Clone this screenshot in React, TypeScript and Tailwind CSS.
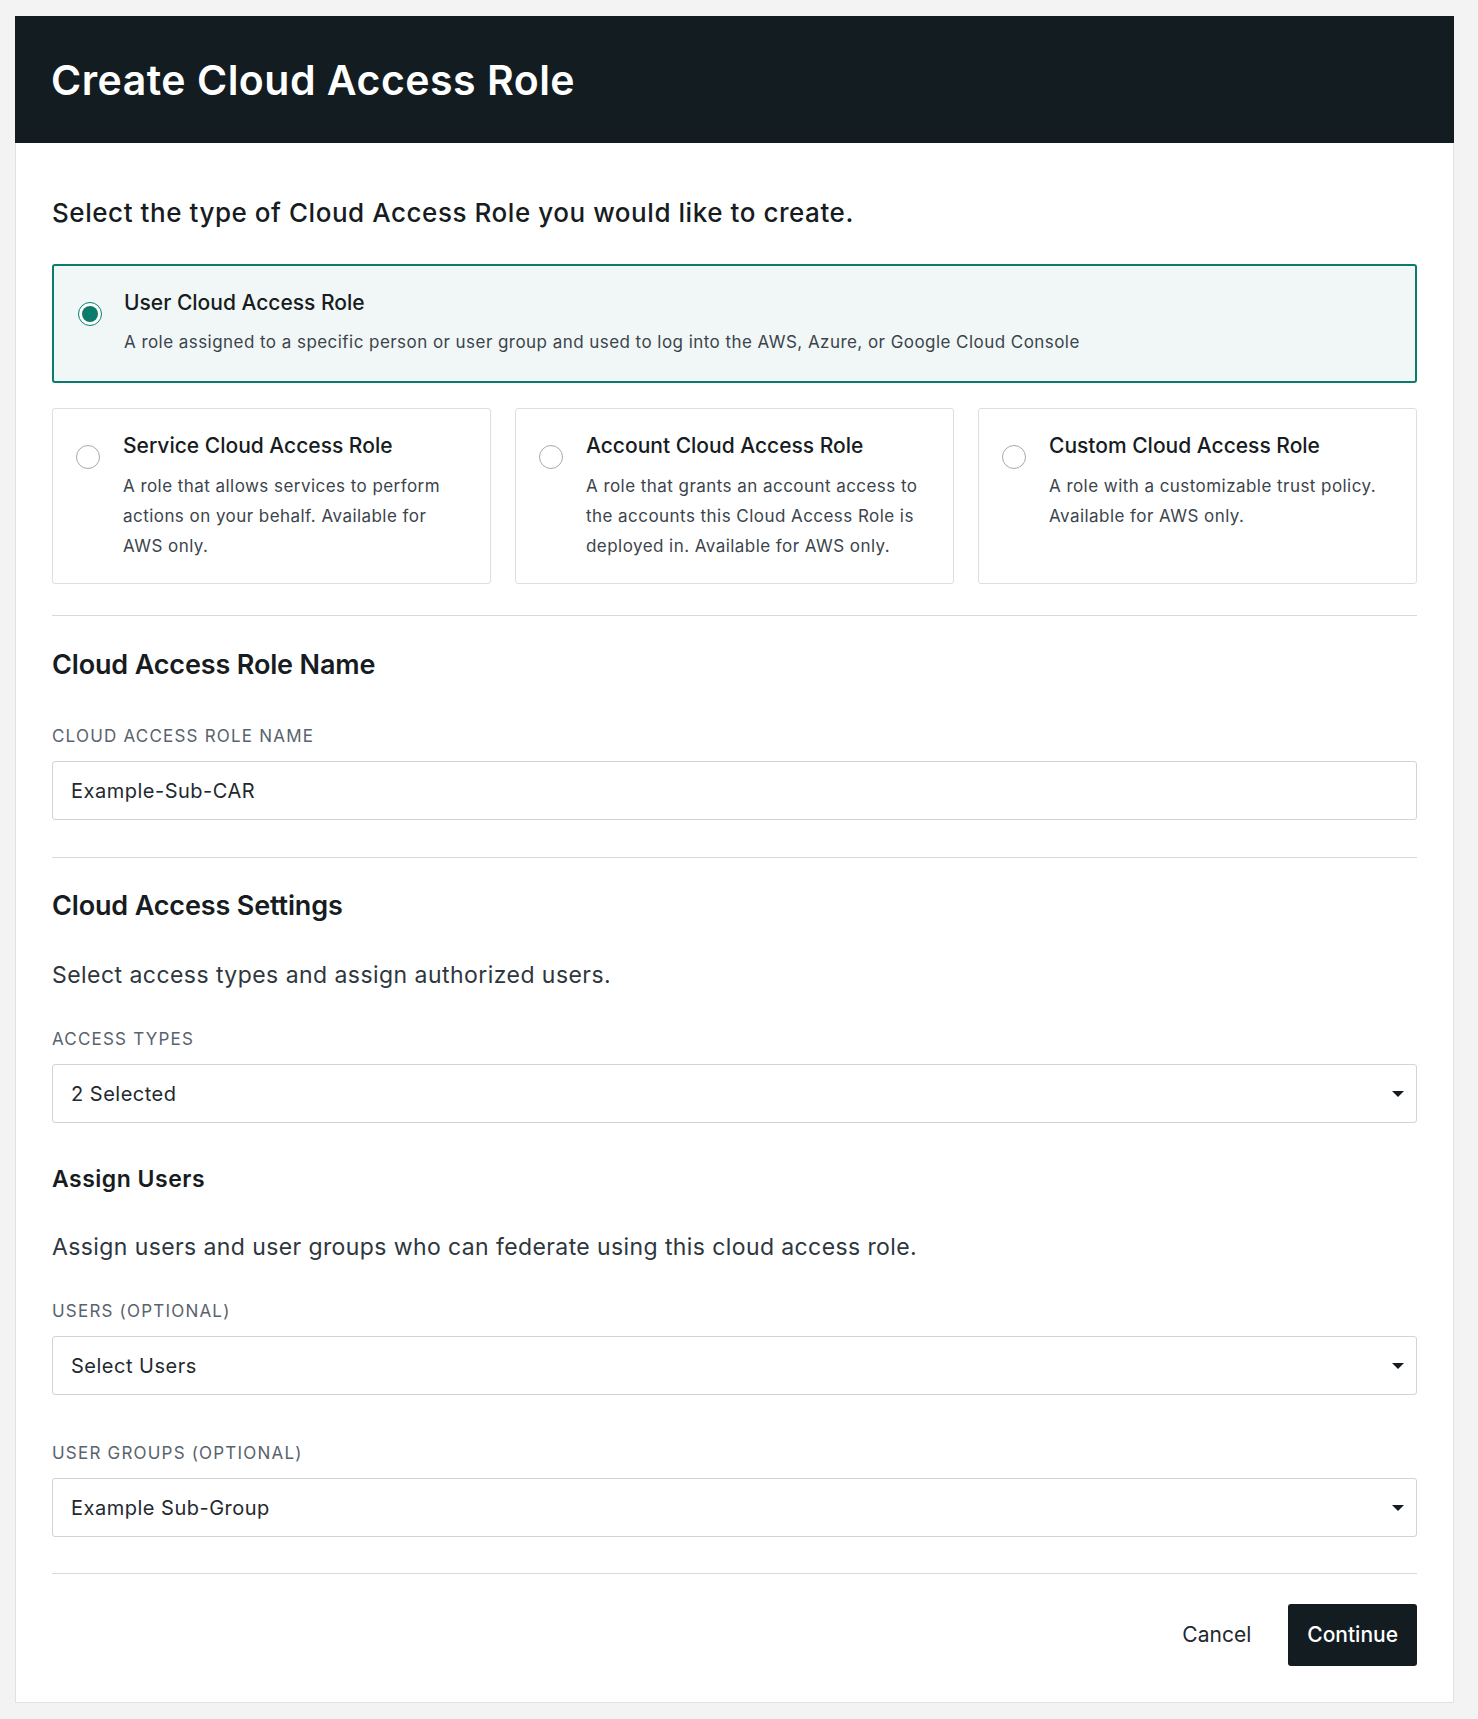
import React from "react";

const font = { fontFamily: "Inter, 'Noto Sans', sans-serif" };

function Radio({ checked }: { checked: boolean }) {
  if (checked) {
    return (
      <div className="mt-[13px] flex h-6 w-6 shrink-0 items-center justify-center rounded-full border-[1.5px] border-[#0b7b6b] bg-white">
        <div className="h-4 w-4 rounded-full bg-[#0b7b6b]" />
      </div>
    );
  }
  return <div className="mt-[13px] h-6 w-6 shrink-0 rounded-full border border-[#a9a9a9] bg-white" />;
}

function Caret() {
  return (
    <svg width="12" height="6" viewBox="0 0 12 6" className="shrink-0">
      <path d="M0 0 L12 0 L6 6 Z" fill="#161c21" />
    </svg>
  );
}

function SmallCard({ title, desc }: { title: string; desc: string }) {
  return (
    <div className="flex h-[176px] gap-[23px] rounded-[3px] border border-[#dedede] bg-white px-[23px] pt-[23px]">
      <Radio checked={false} />
      <div>
        <div className="text-[21px] font-medium leading-[28px] text-[#161c21]">{title}</div>
        <div className="mt-[11px] text-[17px] leading-[30px] tracking-[0.45px] text-[#3b444c]">{desc}</div>
      </div>
    </div>
  );
}

function Label({ children }: { children: React.ReactNode }) {
  return (
    <div className="text-[17px] uppercase leading-[24px] tracking-[1.2px] text-[#59636c]">{children}</div>
  );
}

function SelectBox({ value }: { value: string }) {
  return (
    <div className="mt-[13px] flex h-[59px] items-center justify-between rounded-[3px] border border-[#d3d3d3] bg-white pl-[18px] pr-[12px]">
      <span className="text-[20px] tracking-[0.5px] text-[#22292f]">{value}</span>
      <Caret />
    </div>
  );
}

export default function App() {
  return (
    <div style={font} className="min-h-[1719px] bg-[#f3f3f3] pb-[17px] pl-[15px] pt-[16px]">
      <div className="w-[1439px]">
        <div className="flex h-[127px] items-center bg-[#121c21] px-[36px]">
          <h1 className="text-[41px] font-semibold leading-[48px] tracking-[0.5px] text-white">Create Cloud Access Role</h1>
        </div>
        <div className="border-x border-b border-[#e2e2e2] bg-white px-[36px] pb-[36px] pt-[54px]">
          <div className="text-[26px] font-medium leading-[32px] tracking-[0.55px] text-[#161c21]">
            Select the type of Cloud Access Role you would like to create.
          </div>

          <div className="mt-[35px] flex h-[119px] gap-[22px] rounded-[3px] border-2 border-[#0b7b6b] bg-[#f1f7f6] px-[24px] pt-[23px]">
            <Radio checked={true} />
            <div>
              <div className="text-[21px] font-medium leading-[28px] text-[#161c21]">User Cloud Access Role</div>
              <div className="mt-[10px] text-[17px] leading-[30px] tracking-[0.45px] text-[#3b444c]">
                A role assigned to a specific person or user group and used to log into the AWS, Azure, or Google Cloud Console
              </div>
            </div>
          </div>

          <div className="mt-[25px] grid grid-cols-3 gap-[24px]">
            <SmallCard
              title="Service Cloud Access Role"
              desc="A role that allows services to perform actions on your behalf. Available for AWS only."
            />
            <SmallCard
              title="Account Cloud Access Role"
              desc="A role that grants an account access to the accounts this Cloud Access Role is deployed in. Available for AWS only."
            />
            <SmallCard
              title="Custom Cloud Access Role"
              desc="A role with a customizable trust policy. Available for AWS only."
            />
          </div>

          <div className="mt-[31px] h-px bg-[#d9d9d9]" />

          <div className="mt-[32px] text-[27px] font-semibold leading-[34px] tracking-[-0.15px] text-[#161c21]">Cloud Access Role Name</div>
          <div className="mt-[42px]">
            <Label>Cloud Access Role Name</Label>
          </div>
          <div className="mt-[13px] flex h-[59px] items-center rounded-[3px] border border-[#d3d3d3] bg-white pl-[18px]">
            <span className="text-[20px] tracking-[0.5px] text-[#22292f]">Example-Sub-CAR</span>
          </div>

          <div className="mt-[37px] h-px bg-[#d9d9d9]" />

          <div className="mt-[31px] text-[27px] font-semibold leading-[34px] tracking-[-0.15px] text-[#161c21]">Cloud Access Settings</div>
          <div className="mt-[36px] text-[23px] leading-[32px] tracking-[0.45px] text-[#2f373e]">
            Select access types and assign authorized users.
          </div>
          <div className="mt-[36px]">
            <Label>Access Types</Label>
          </div>
          <SelectBox value="2 Selected" />

          <div className="mt-[41px] text-[23px] font-semibold leading-[30px] tracking-[0.5px] text-[#161c21]">Assign Users</div>
          <div className="mt-[37px] text-[23px] leading-[32px] tracking-[0.4px] text-[#2f373e]">
            Assign users and user groups who can federate using this cloud access role.
          </div>
          <div className="mt-[36px]">
            <Label>Users (Optional)</Label>
          </div>
          <SelectBox value="Select Users" />

          <div className="mt-[46px]">
            <Label>User Groups (Optional)</Label>
          </div>
          <SelectBox value="Example Sub-Group" />

          <div className="mt-[36px] h-px bg-[#d9d9d9]" />

          <div className="mt-[30px] flex items-center justify-end gap-[37px]">
            <button className="text-[21px] text-[#22292f]">Cancel</button>
            <button className="h-[62px] rounded-[3px] bg-[#121c21] px-[19px] text-[21px] font-medium text-white">
              Continue
            </button>
          </div>
        </div>
      </div>
    </div>
  );
}
